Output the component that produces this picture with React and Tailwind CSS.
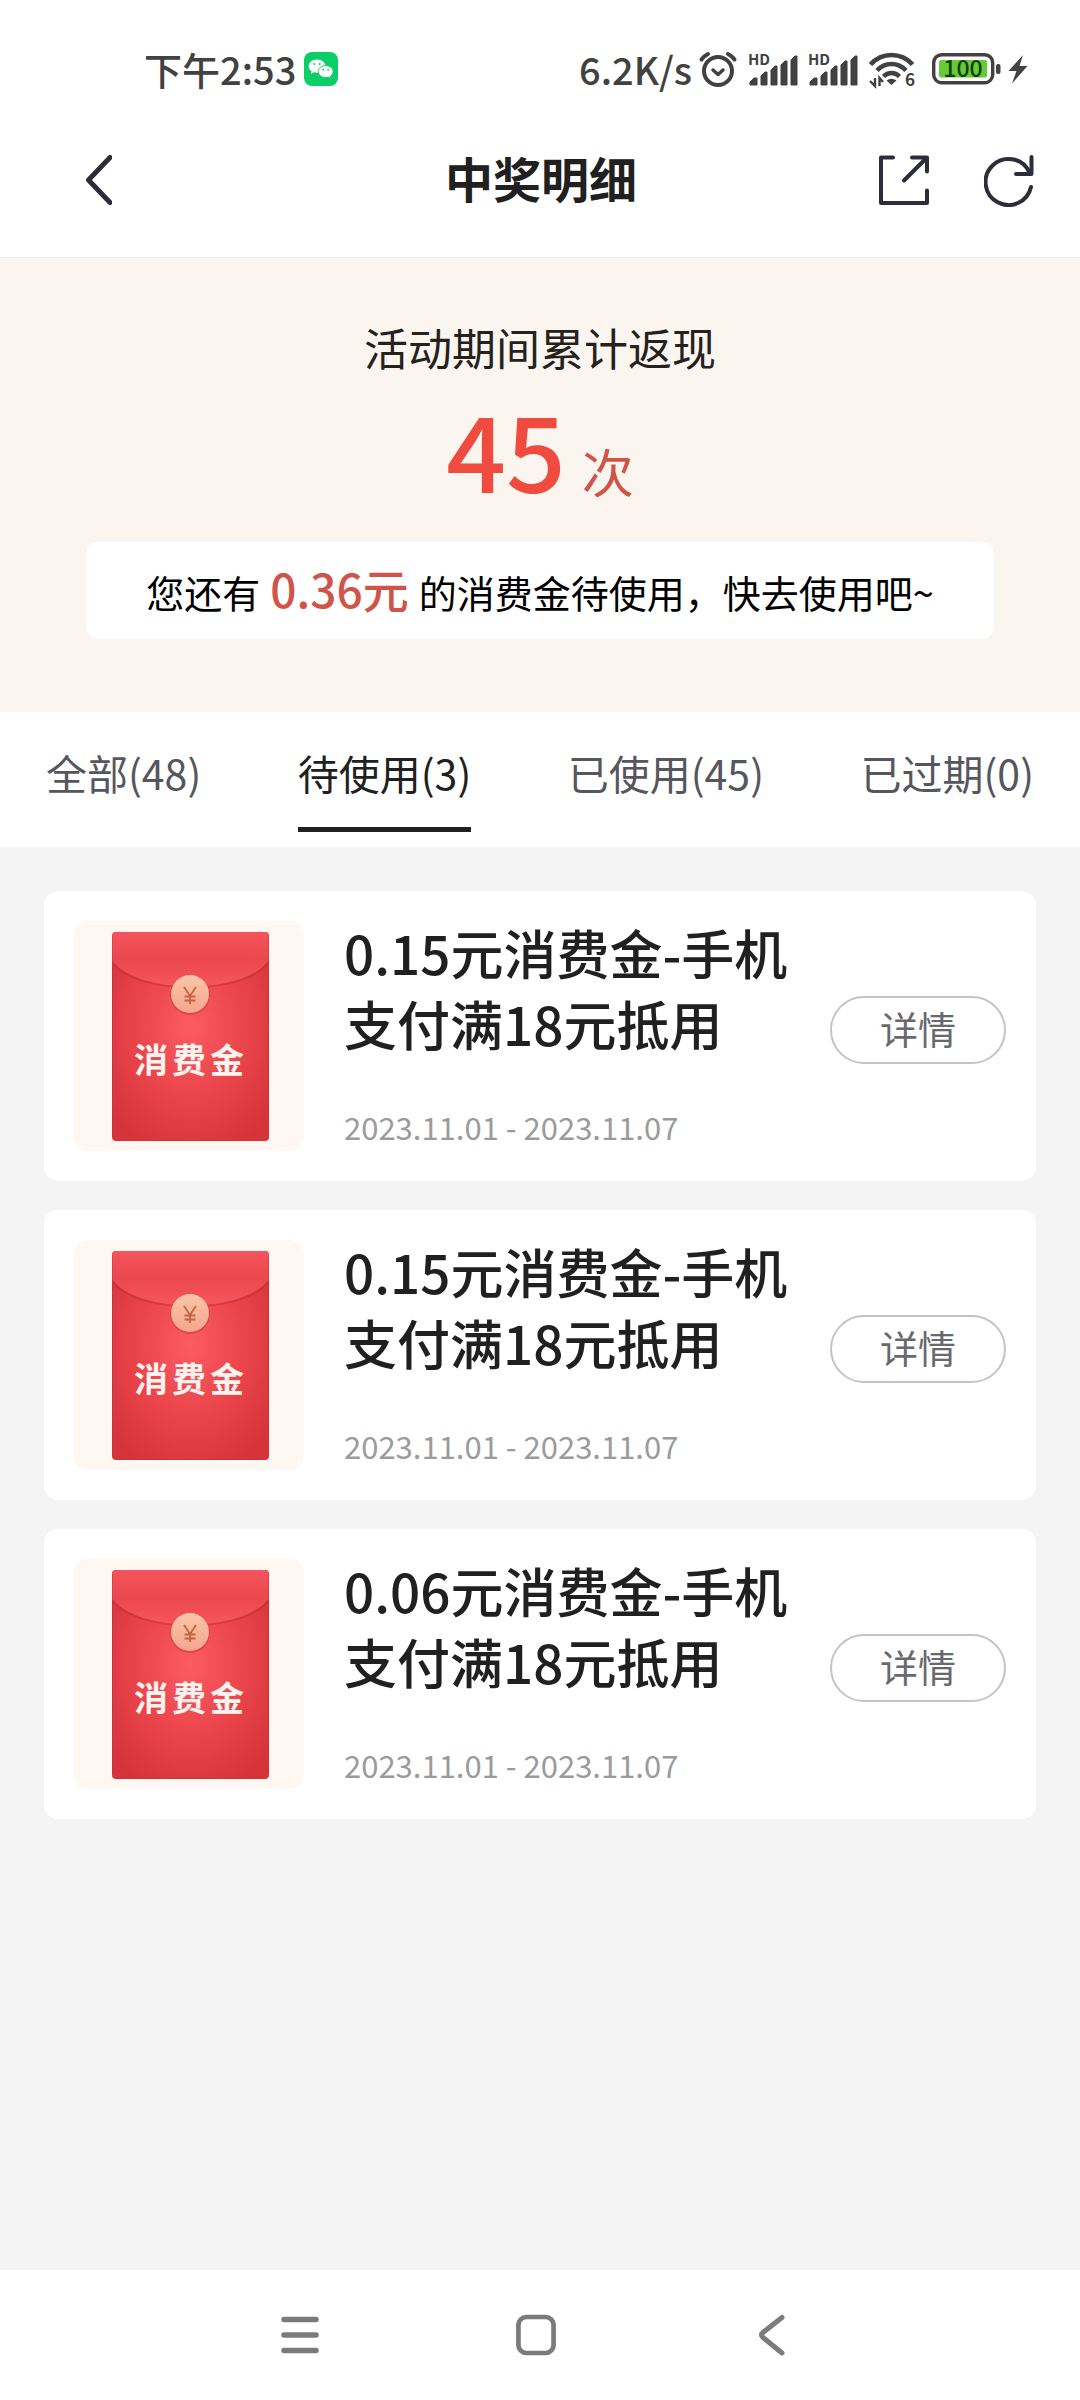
import React, { useState } from 'react'

const TABS = [
  { key: 'all', label: '全部', count: 48 },
  { key: 'pending', label: '待使用', count: 3 },
  { key: 'used', label: '已使用', count: 45 },
  { key: 'expired', label: '已过期', count: 0 },
]

const COUPONS = [
  { id: 1, title: '0.15元消费金-手机支付满18元抵用', period: '2023.11.01 - 2023.11.07' },
  { id: 2, title: '0.15元消费金-手机支付满18元抵用', period: '2023.11.01 - 2023.11.07' },
  { id: 3, title: '0.06元消费金-手机支付满18元抵用', period: '2023.11.01 - 2023.11.07' },
]

function WechatIcon() {
  return (
    <svg width="34" height="34" viewBox="0 0 34 34" aria-hidden="true">
      <rect width="34" height="34" rx="8" fill="#0bcf66" />
      <path d="M13 7.5c-4.8 0-8.3 2.9-8.3 6.7 0 2.1 1.1 3.9 2.9 5.1l-.8 2.6 3-1.6c1 .3 2 .5 3.2.5 5 0 8.4-2.9 8.4-6.6S17.9 7.5 13 7.5z" fill="#fff" />
      <path d="M21.7 13.6c-4.3 0-7.5 2.6-7.5 6s3.2 6 7.5 6c1 0 1.9-.1 2.7-.4l2.6 1.4-.7-2.3c1.7-1.1 2.8-2.8 2.8-4.7 0-3.4-3.2-6-7.4-6z" fill="#fff" stroke="#0bcf66" strokeWidth="1" />
      <g fill="#0bcf66">
        <circle cx="10.3" cy="12" r="1" />
        <circle cx="15.7" cy="12" r="1" />
        <circle cx="19.3" cy="17.9" r=".9" />
        <circle cx="24.2" cy="17.9" r=".9" />
      </g>
    </svg>
  )
}

function AlarmIcon() {
  return (
    <svg width="40" height="36" viewBox="0 0 40 36" fill="none" stroke="#414141" strokeLinecap="round" strokeLinejoin="round" aria-hidden="true">
      <circle cx="20" cy="20" r="14" strokeWidth="4" />
      <path d="M15 19l5 4.5 5-4.5" strokeWidth="3.5" />
      <path d="M3.5 8.5Q6 5 10 3M30 3q4 2 6.500 5.500" strokeWidth="4" />
    </svg>
  )
}

function SignalIcon() {
  return (
    <svg width="50" height="48" viewBox="0 -6 50 48" fill="#414141" aria-hidden="true">
      <text x="0" y="14" fontSize="15" fontWeight="700">HD</text>
      <path d="M2 34v-3l4-4h3v7zM13 34V25l4-4h2v13zM23 34V19l4-4h2v19zM33 34V14l4-4h2v24zM43 34V9l4-4h2v29z" stroke="#414141" strokeWidth="1" strokeLinejoin="round" />
    </svg>
  )
}

function WifiIcon() {
  return (
    <svg width="48" height="48" viewBox="0 -6 48 48" fill="none" stroke="#414141" strokeWidth="4.5" aria-hidden="true">
      <path d="M2.5 13.5Q11 4 23.500 4t21 9.500" />
      <path d="M9 19.5q6-6.500 14.500-6.500T38 19.500" />
      <path d="M15.5 25.5q3.500-3.500 8-3.500t8 3.500" />
      <path d="M18.5 29.5q5-3.500 10 0l-5 4.500z" fill="#414141" stroke="none" />
      <path d="M7 27v8l-5-5M11.5 35v-8l3.500 4" strokeWidth="2.4" />
      <text x="37" y="35" fontSize="17" fontWeight="700" fill="#414141" stroke="none">6</text>
    </svg>
  )
}

function BatteryIcon() {
  return (
    <svg width="70" height="40" viewBox="0 -4 70 40" aria-hidden="true">
      <rect x="1.7" y="1.7" width="59" height="28" rx="8" fill="#fff" stroke="#414141" strokeWidth="3.4" />
      <rect x="7" y="7" width="48" height="17.5" rx="2" fill="#66cc33" />
      <rect x="64" y="11" width="4.5" height="10" rx="2" fill="#414141" />
      <text x="31" y="24" fontSize="23" fontWeight="500" textAnchor="middle" fill="#123d08">100</text>
    </svg>
  )
}

function BoltIcon() {
  return (
    <svg width="20" height="30" viewBox="0 0 20 30" fill="#414141" aria-hidden="true">
      <path d="M15 1L.5 17h8L4 29.5 19.5 12h-8z" />
    </svg>
  )
}

function StatusBar() {
  return (
    <div className="flex items-center h-[103px] pt-[34px] pl-36 pr-[52px] text-[38px] leading-9 font-medium text-[#414141]">
      <span>下午2:53</span>
      <span className="ml-2"><WechatIcon /></span>
      <div className="ml-auto flex items-center gap-1.5">
        <span>6.2K/s</span>
        <AlarmIcon />
        <div className="flex items-center gap-2.5 ml-1">
          <SignalIcon />
          <SignalIcon />
          <WifiIcon />
        </div>
        <div className="flex items-center gap-1.5 ml-2.5">
          <BatteryIcon />
          <BoltIcon />
        </div>
      </div>
    </div>
  )
}

function Header() {
  return (
    <header className="grid grid-cols-3 items-center h-[155px] pl-[84px] pr-[46px] border-b border-[#ececea]">
      <button aria-label="返回" className="justify-self-start">
        <svg width="28" height="52" viewBox="0 0 28 52" fill="none" stroke="#2d2c3a" strokeWidth="5" strokeLinecap="round" strokeLinejoin="round">
          <path d="M26 3.5L4.500 26 26 48.500" />
        </svg>
      </button>
      <h1 className="justify-self-center pr-9 pb-1.5 text-[48px] leading-[60px] font-bold text-[#202020] whitespace-nowrap">中奖明细</h1>
      <div className="justify-self-end flex items-center gap-[54px]">
        <button aria-label="分享">
          <svg width="52" height="52" viewBox="0 0 52 52" fill="none" stroke="#2d2c3a" strokeWidth="4" strokeLinecap="round" strokeLinejoin="round">
            <path d="M15 3.5H3V49h46V36.5" />
            <path d="M34 3.5h15v14M49 3.5l-23 23" />
          </svg>
        </button>
        <button aria-label="刷新">
          <svg width="50" height="54" viewBox="0 0 50 54" fill="none" stroke="#2d2c3a" strokeWidth="4" strokeLinecap="round" strokeLinejoin="round">
            <path d="M47 34A23 23 0 1 1 45 18.500" />
            <path d="M47.500 4v17H32" />
          </svg>
        </button>
      </div>
    </header>
  )
}

function Summary() {
  return (
    <section className="flex flex-col items-center px-[86px] pt-[59px] pb-[73px] bg-[#faf5ef]">
      <p className="text-[44px] leading-[60px] text-[#25211d]">活动期间累计返现</p>
      <p className="mt-3.5 flex items-baseline gap-4">
        <span className="text-[105px] leading-[112px] font-medium text-[#ef4b3f]">45</span>
        <span className="text-[52px] leading-[60px] text-[#d0544a]">次</span>
      </p>
      <p className="mt-[39px] w-full h-[97px] rounded-xl bg-white flex items-baseline justify-center gap-2.5 text-[38px] leading-[92px] text-black whitespace-nowrap">
        <span>您还有</span>
        <span className="text-[46px] font-medium text-[#d0544a]">0.36元</span>
        <span>的消费金待使用，快去使用吧~</span>
      </p>
    </section>
  )
}

function Tabs({ active, onChange }) {
  return (
    <nav className="flex justify-between h-[135px] px-[46px] pt-[30px] bg-white">
      {TABS.map(t => (
        <button
          key={t.key}
          onClick={() => onChange(t.key)}
          className={
            t.key === active
              ? 'h-[90px] pb-[25px] text-[41px] leading-[60px] border-b-[5px] border-[#202020] text-[#202020]'
              : 'h-[90px] pb-[25px] text-[41px] leading-[60px] border-b-[5px] border-transparent text-[#56565e]'
          }
        >
          {t.label}({t.count})
        </button>
      ))}
    </nav>
  )
}

function RedPacket() {
  return (
    <svg width="230" height="230" viewBox="0 0 230 230" className="shrink-0" aria-hidden="true">
      <defs>
        <radialGradient id="packet" cx=".5" cy=".45" r=".65">
          <stop offset="0" stopColor="#fb5c62" />
          <stop offset=".55" stopColor="#e9444a" />
          <stop offset="1" stopColor="#d53439" />
        </radialGradient>
        <linearGradient id="flap" x1="0" y1="0" x2="0" y2="1">
          <stop offset="0" stopColor="#f4545b" />
          <stop offset=".5" stopColor="#ea484e" />
          <stop offset="1" stopColor="#f6565c" />
        </linearGradient>
        <linearGradient id="coin" x1="0" y1="0" x2="0" y2="1">
          <stop offset="0" stopColor="#fbc5a8" />
          <stop offset="1" stopColor="#f5a58f" />
        </linearGradient>
      </defs>
      <rect width="230" height="230" rx="14" fill="#fff8f2" />
      <rect x="38.5" y="11.5" width="156" height="208" rx="3" fill="url(#packet)" stroke="#c9353c" strokeWidth="1" />
      <path d="M39 32C66 76 167 76 194 32v12C167 75 66 75 39 44z" fill="#b9252c" opacity=".4" />
      <path d="M38.5 14q0-3 3-3h150q3 0 3 3v26C168 74 65 74 38.500 40z" fill="url(#flap)" />
      <circle cx="116" cy="74" r="20" fill="#c9353c" opacity=".5" />
      <circle cx="116" cy="73" r="19" fill="url(#coin)" />
      <path d="M110 66l6 9 6-9M116 75v8M110.5 75.5h11M110.5 79.5h11" fill="none" stroke="#c2653c" strokeWidth="1.8" />
      <text y="152" fontSize="34" fontWeight="700" textAnchor="middle" fill="#fff3f0">
        <tspan x="77">消</tspan>
        <tspan x="115">费</tspan>
        <tspan x="153">金</tspan>
      </text>
    </svg>
  )
}

function CouponCard({ coupon }) {
  return (
    <li className="flex p-[30px] rounded-[14px] bg-white">
      <RedPacket />
      <div className="flex-1 ml-10 flex flex-col justify-between">
        <h2 className="-mt-1 text-[53px] leading-[71px] font-medium text-[#202020]">{coupon.title}</h2>
        <p className="text-[31px] leading-[48px] text-[#9b9b9b]">{coupon.period}</p>
      </div>
      <button className="self-center mb-3 w-44 h-[68px] pb-1 rounded-full border-2 border-[#c4c4c4] text-[38px] leading-[60px] text-[#68686e]">详情</button>
    </li>
  )
}

function SystemNav() {
  return (
    <footer className="flex items-center justify-center gap-[196px] h-[130px] pr-2 bg-white">
      <button aria-label="最近任务">
        <svg width="40" height="42" viewBox="0 0 40 42" stroke="#7b7b7b" strokeWidth="5.5" strokeLinecap="round">
          <path d="M4 5.5h32M4 21h32M4 36.5h32" />
        </svg>
      </button>
      <button aria-label="主屏幕">
        <svg width="40" height="42" viewBox="0 0 40 42" fill="none" stroke="#7b7b7b" strokeWidth="4.7">
          <rect x="2.4" y="3" width="35.2" height="36" rx="8" />
        </svg>
      </button>
      <button aria-label="返回上一级">
        <svg width="40" height="42" viewBox="0 0 40 42" fill="none" stroke="#7b7b7b" strokeWidth="5" strokeLinecap="round" strokeLinejoin="round">
          <path d="M30 3.5L11 18.5q-3 2.500 0 5L30 39" />
        </svg>
      </button>
    </footer>
  )
}

export default function App() {
  const [active, setActive] = useState('pending')

  return (
    <div className="min-h-screen flex flex-col bg-white font-['Noto_Sans_CJK_SC',sans-serif]">
      <StatusBar />
      <Header />
      <Summary />
      <Tabs active={active} onChange={setActive} />
      <main className="flex-1 px-11 py-11 bg-[#f4f4f4]">
        <ul className="flex flex-col gap-[29px]">
          {COUPONS.map(c => <CouponCard key={c.id} coupon={c} />)}
        </ul>
      </main>
      <SystemNav />
    </div>
  )
}
